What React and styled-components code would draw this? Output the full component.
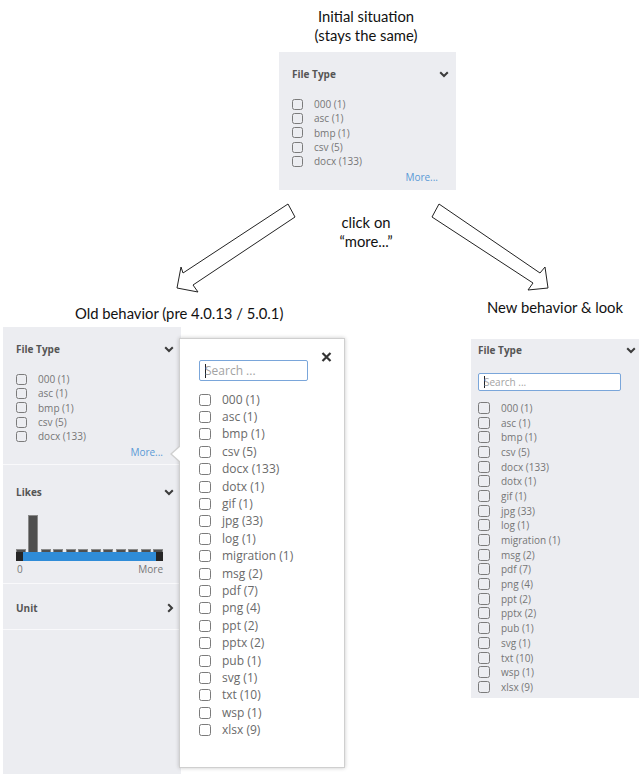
import React from 'react'
import styled, { createGlobalStyle } from 'styled-components'

const GlobalStyle = createGlobalStyle`
  html, body {
    margin: 0;
    padding: 0;
    background: #fff;
  }
  body {
    font-family: "Open Sans", "Noto Sans", sans-serif;
  }
`

const FILE_TYPES = [
  ['000', 1], ['asc', 1], ['bmp', 1], ['csv', 5], ['docx', 133],
  ['dotx', 1], ['gif', 1], ['jpg', 33], ['log', 1], ['migration', 1],
  ['msg', 2], ['pdf', 7], ['png', 4], ['ppt', 2], ['pptx', 2],
  ['pub', 1], ['svg', 1], ['txt', 10], ['wsp', 1], ['xlsx', 9]
]

// Diagram canvas
const Canvas = styled.div`
  position: relative;
  width: 642px;
  height: 776px;
  overflow: hidden;
  background: #fff;
`

const Node = styled.div`
  position: absolute;
  left: ${p => p.$x}px;
  top: ${p => p.$y}px;
  width: ${p => (p.$w ? `${p.$w}px` : 'auto')};
`

const Caption = styled.p`
  margin: 0;
  font-family: Lato, "Liberation Sans", sans-serif;
  font-size: 14.8px;
  line-height: 19px;
  color: #111;
  text-align: ${p => p.$align || 'center'};
  white-space: nowrap;
`

const ArrowLayer = styled.svg`
  position: absolute;
  left: 0;
  top: 0;
  width: 642px;
  height: 776px;
  pointer-events: none;
`

// Facet panels
const Panel = styled.aside`
  box-sizing: border-box;
  width: ${p => p.$w}px;
  height: ${p => p.$h}px;
  background: #ecedf1;
`

const Section = styled.div`
  box-sizing: border-box;
  padding: ${p => p.$pt}px ${p => p.$pr ?? 7}px ${p => p.$pb || 0}px ${p => p.$pl ?? 13}px;
  height: ${p => (p.$h ? `${p.$h}px` : 'auto')};
  border-bottom: ${p => (p.$line ? '1px solid #f9f9fb' : 'none')};
`

const Header = styled.div`
  display: flex;
  align-items: center;
  justify-content: space-between;
  height: 16px;
`

const Title = styled.h3`
  margin: 0;
  font-size: 10px;
  font-weight: 700;
  color: #555;
  line-height: 16px;
`

const List = styled.ul`
  list-style: none;
  margin: ${p => p.$mt}px 0 0;
  padding: 0;
`

const Row = styled.li`
  display: flex;
  align-items: center;
  gap: 11px;
  height: ${p => p.$h}px;
`

const Box = styled.span`
  flex: none;
  box-sizing: border-box;
  width: ${p => p.$s}px;
  height: ${p => p.$s}px;
  border: 1.2px solid #7b7b7b;
  border-radius: 2.5px;
`

const Label = styled.span`
  font-size: ${p => p.$fs}px;
  line-height: 1;
  color: ${p => p.$c || '#767676'};
  white-space: nowrap;
`

const More = styled.a`
  display: block;
  margin: 3px 11px 0 0;
  font-size: 10px;
  line-height: 12px;
  color: #5a9ad6;
  text-align: right;
  cursor: pointer;
`

const SearchBox = styled.div`
  box-sizing: border-box;
  display: flex;
  align-items: center;
  width: ${p => p.$w}px;
  height: ${p => p.$h}px;
  margin-top: ${p => p.$mt || 0}px;
  padding-left: 5px;
  border: 1.5px solid #7aa6da;
  border-radius: 2px;
  background: #fff;
  font-size: ${p => p.$fs}px;
  color: #a3a3a3;

  &::before {
    content: '';
    width: 1px;
    height: ${p => p.$fs + 2}px;
    margin-right: -1px;
    background: #222;
  }
`

// Likes histogram
const Histogram = styled.div`
  display: grid;
  grid-template-columns: repeat(12, 1fr);
  gap: 2.5px;
  align-items: end;
  height: 38px;
  margin: 14px 11px 0 0;
`

const Bar = styled.span`
  box-sizing: border-box;
  height: ${p => p.$h}px;
  background: #4f4f4f;
  border: 1px solid #8a8a8a;
  border-bottom: none;
`

const Slider = styled.div`
  display: flex;
  height: 9px;
  margin-right: 11px;
`

const Handle = styled.span`
  width: 7px;
  background: #262626;
`

const Track = styled.span`
  flex: 1;
  background: #2f8cd8;
`

const RangeLabels = styled.div`
  display: flex;
  justify-content: space-between;
  margin: 2px 11px 0 1px;
  font-size: 10px;
  line-height: 12px;
  color: #777;
`

// Old popup
const Popup = styled.div`
  position: relative;
  box-sizing: border-box;
  width: 166px;
  height: 430px;
  padding: 21px 0 0 19px;
  background: #fff;
  border: 1px solid #cfcfcf;
  box-shadow: 0 0 4px rgba(0, 0, 0, 0.22);

  &::before {
    content: '';
    position: absolute;
    left: -10px;
    top: 106px;
    border-style: solid;
    border-width: 9px 10px 9px 0;
    border-color: transparent #cfcfcf transparent transparent;
  }

  &::after {
    content: '';
    position: absolute;
    left: -8px;
    top: 107px;
    border-style: solid;
    border-width: 8px 9px 8px 0;
    border-color: transparent #fff transparent transparent;
  }
`

const Close = styled.button`
  position: absolute;
  top: 13px;
  right: 12px;
  display: flex;
  padding: 0;
  border: 0;
  background: none;
  cursor: pointer;
`

const Chevron = ({ dir = 'down' }) =>
  dir === 'down' ? (
    <svg width="10" height="7" viewBox="0 0 10 7">
      <polyline points="1.2,1.2 5,5 8.8,1.2" fill="none" stroke="#3c3c3c" strokeWidth="2" />
    </svg>
  ) : (
    <svg width="7" height="10" viewBox="0 0 7 10">
      <polyline points="1.2,1.2 5,5 1.2,8.8" fill="none" stroke="#3c3c3c" strokeWidth="2" />
    </svg>
  )

const CheckList = ({ items, rowH, box, fs, mt, color }) => (
  <List $mt={mt}>
    {items.map(([name, n]) => (
      <Row key={name} $h={rowH}>
        <Box $s={box} />
        <Label $fs={fs} $c={color}>{name} ({n})</Label>
      </Row>
    ))}
  </List>
)

const FileTypeShort = ({ line }) => (
  <Section $pt={14} $h={line ? 138 : undefined} $line={line}>
    <Header>
      <Title>File Type</Title>
      <Chevron />
    </Header>
    <CheckList items={FILE_TYPES.slice(0, 5)} rowH={14.3} box={11} fs={10} mt={15} />
    <More>More...</More>
  </Section>
)

const App = () => {
  const bars = [3, 37, 3, 3, 3, 3, 3, 3, 3, 3, 3, 3]

  return (
    <>
      <GlobalStyle />
      <Canvas>
        <Node $x={266} $y={7} $w={200}>
          <Caption>Initial situation</Caption>
          <Caption>(stays the same)</Caption>
        </Node>

        <Node $x={279} $y={52}>
          <Panel $w={177} $h={138}>
            <FileTypeShort />
          </Panel>
        </Node>

        <Node $x={306} $y={213} $w={120}>
          <Caption>click on</Caption>
          <Caption>“more...”</Caption>
        </Node>

        <Node $x={75} $y={304}>
          <Caption $align="left">Old behavior (pre 4.0.13 / 5.0.1)</Caption>
        </Node>

        <Node $x={487} $y={298}>
          <Caption $align="left">New behavior &amp; look</Caption>
        </Node>

        <Node $x={3} $y={327}>
          <Panel $w={178} $h={447}>
            <FileTypeShort line />
            <Section $pt={19} $pb={8} $line>
              <Header>
                <Title>Likes</Title>
                <Chevron />
              </Header>
              <Histogram>
                {bars.map((h, i) => (
                  <Bar key={i} $h={h} />
                ))}
              </Histogram>
              <Slider>
                <Handle />
                <Track />
                <Handle />
              </Slider>
              <RangeLabels>
                <span>0</span>
                <span>More</span>
              </RangeLabels>
            </Section>
            <Section $pt={16} $pb={13} $line>
              <Header>
                <Title>Unit</Title>
                <Chevron dir="right" />
              </Header>
            </Section>
          </Panel>
        </Node>

        <Node $x={179} $y={338}>
          <Popup>
            <Close aria-label="close">
              <svg width="11" height="10" viewBox="0 0 11 10">
                <path d="M1.5 1 L9.5 9 M9.5 1 L1.5 9" stroke="#333" strokeWidth="2.2" />
              </svg>
            </Close>
            <SearchBox $w={109} $h={21} $fs={12}>Search ...</SearchBox>
            <CheckList items={FILE_TYPES} rowH={17.4} box={12} fs={12} mt={10} color="#6a6a6a" />
          </Popup>
        </Node>

        <Node $x={471} $y={339}>
          <Panel $w={168} $h={359}>
            <Section $pt={3} $pl={7} $pr={3}>
              <Header>
                <Title>File Type</Title>
                <Chevron />
              </Header>
              <SearchBox $w={143} $h={18} $fs={10} $mt={15}>Search ...</SearchBox>
              <CheckList items={FILE_TYPES} rowH={14.7} box={12} fs={10} mt={9.5} />
            </Section>
          </Panel>
        </Node>

        <ArrowLayer viewBox="0 0 642 776">
          <polygon
            points="288,204 183,273 181,267 177,288 198,292 193,285 295,217"
            fill="#fff"
            stroke="#222"
            strokeWidth="1"
          />
          <polygon
            points="439,204 540,273 545,267 548,288 528,290 533,283 432,217"
            fill="#fff"
            stroke="#222"
            strokeWidth="1"
          />
        </ArrowLayer>
      </Canvas>
    </>
  )
}

export default App
